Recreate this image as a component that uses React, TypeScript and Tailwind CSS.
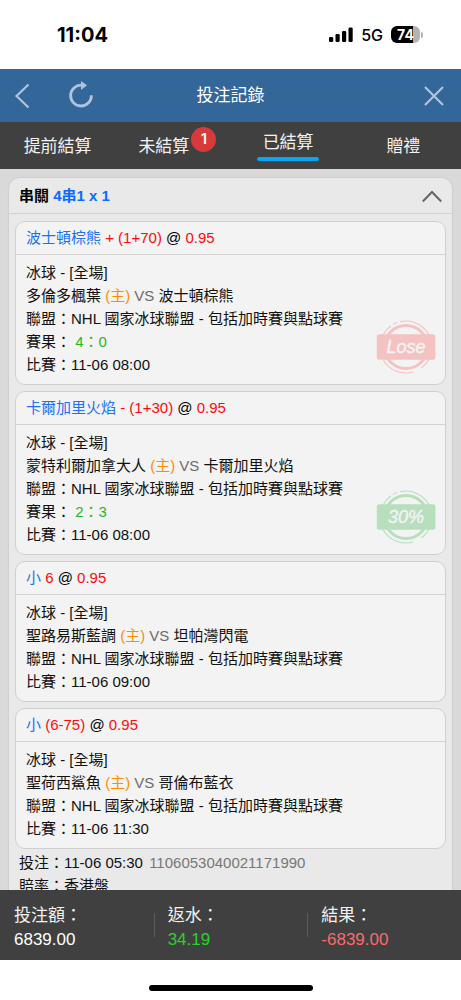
import { useState } from 'react';
import clsx from 'clsx';

type Bet = {
  pick: string;
  line: string;
  odds: string;
  home: string;
  away: string;
  result?: string;
  time: string;
  stamp?: 'lose' | 'partial';
};

const BETS: Bet[] = [
  { pick: '波士頓棕熊', line: '+ (1+70)', odds: '0.95', home: '多倫多楓葉', away: '波士頓棕熊', result: '4：0', time: '11-06 08:00', stamp: 'lose' },
  { pick: '卡爾加里火焰', line: '- (1+30)', odds: '0.95', home: '蒙特利爾加拿大人', away: '卡爾加里火焰', result: '2：3', time: '11-06 08:00', stamp: 'partial' },
  { pick: '小', line: '6', odds: '0.95', home: '聖路易斯藍調', away: '坦帕灣閃電', time: '11-06 09:00' },
  { pick: '小', line: '(6-75)', odds: '0.95', home: '聖荷西鯊魚', away: '哥倫布藍衣', time: '11-06 11:30' },
];

const TABS = [
  { id: 'early', label: '提前結算' },
  { id: 'open', label: '未結算', count: 1 },
  { id: 'settled', label: '已結算' },
  { id: 'gift', label: '贈禮' },
];

const TOTALS = [
  { label: '投注額：', value: '6839.00', color: 'text-white' },
  { label: '返水：', value: '34.19', color: 'text-[#2bd12b]' },
  { label: '結果：', value: '-6839.00', color: 'text-[#fa6b6b]' },
];

function StatusBar() {
  return (
    <div className="flex h-[69px] shrink-0 items-center justify-between bg-white pr-[38px] pl-[57px] font-['Inter',sans-serif] text-black">
      <span className="text-xl font-bold">11:04</span>
      <div className="flex items-center gap-2">
        <svg width="24" height="15" viewBox="0 0 24 15" fill="currentColor" aria-hidden="true">
          <rect x="0" y="10" width="4.2" height="5" rx="1.2" />
          <rect x="6.5" y="7" width="4.2" height="8" rx="1.2" />
          <rect x="13" y="4" width="4.2" height="11" rx="1.2" />
          <rect x="19.5" y="0.5" width="4.2" height="14.5" rx="1.2" />
        </svg>
        <span className="text-base font-medium">5G</span>
        <div className="flex items-center gap-px">
          <div className="flex h-[17px] w-[29px] items-center justify-center rounded-md bg-linear-to-r from-black from-75% to-[#b3b3b3] to-75% text-sm font-bold text-white">
            74
          </div>
          <div className="h-1.5 w-0.5 rounded-r-full bg-[#b3b3b3]" />
        </div>
      </div>
    </div>
  );
}

function Header() {
  return (
    <header className="flex h-[53px] shrink-0 items-center justify-between bg-[#336699] px-3 text-[#b0c4de]">
      <div className="flex flex-1 items-center gap-8">
        <button type="button" aria-label="返回" className="pl-0.5">
          <svg width="20" height="28" viewBox="0 0 20 28" fill="none" stroke="currentColor" strokeWidth="2.2">
            <path d="M14.5 2.5 L2.5 14 L14.5 25.5" />
          </svg>
        </button>
        <button type="button" aria-label="重新整理">
          <svg width="30" height="30" viewBox="0 0 30 30">
            <path d="M25.4 14.2 A10.4 10.4 0 1 1 15.6 4.2" fill="none" stroke="currentColor" strokeWidth="2.8" />
            <path d="M15 0 L21 4.2 L15 9 Z" fill="currentColor" />
          </svg>
        </button>
      </div>
      <h1 className="text-[17px] text-white">投注記錄</h1>
      <div className="flex flex-1 justify-end">
        <button type="button" aria-label="關閉" className="pr-1">
          <svg width="22" height="22" viewBox="0 0 22 22" fill="none" stroke="currentColor" strokeWidth="2.2">
            <path d="M2 2 L20 20 M20 2 L2 20" />
          </svg>
        </button>
      </div>
    </header>
  );
}

function Stamp({ kind }: { kind: 'lose' | 'partial' }) {
  return (
    <svg
      className={clsx('absolute right-[9px] bottom-[9px]', kind === 'lose' ? 'text-[#f5c2c2]' : 'text-[#b7dfbd]')}
      width="60"
      height="56"
      viewBox="0 0 60 56"
    >
      <g fill="none" stroke="currentColor">
        <circle cx="30" cy="28" r="21.5" strokeWidth="3" />
        <path strokeWidth="1.1" d="M17 5.5 A26 26 0 0 1 21 3.6 M24 2.7 A26 26 0 0 1 53 16 M7 16 A26 26 0 0 1 15 6.8 M54 38 A26 26 0 0 1 45.5 48.8 M7 40.5 A26 26 0 0 0 37 53" />
      </g>
      <rect x="0.8" y="15.3" width="58.6" height="25.4" rx="2.5" fill="currentColor" />
      <text
        x="30"
        y="34"
        textAnchor="middle"
        stroke="#f3f3f3"
        strokeWidth="0.4"
        className="fill-[#f3f3f3] font-['Liberation_Sans',sans-serif] text-lg italic"
      >
        {kind === 'lose' ? 'Lose' : '30%'}
      </text>
    </svg>
  );
}

function BetCard({ bet }: { bet: Bet }) {
  return (
    <li className="relative rounded-[10px] border border-[#cfcfcf] bg-[#f3f3f3]">
      <h3 className="border-b border-[#d3d3d3] px-2.5 leading-8">
        <span className="text-[#1a73f0]">{bet.pick}</span> <span className="text-[#ff0a0a]">{bet.line}</span>{' '}
        <span className="text-black">@</span> <span className="text-[#ff0a0a]">{bet.odds}</span>
      </h3>
      <div className="px-2.5 pt-1.5 pb-2 leading-[23px]">
        <p>冰球 - [全場]</p>
        <p>
          {bet.home} <span className="text-[#ff8c00]">(主)</span> <span className="text-[#6b6b6b]">VS</span> {bet.away}
        </p>
        <p>聯盟：NHL 國家冰球聯盟 - 包括加時賽與點球賽</p>
        {bet.result && (
          <p>
            賽果： <span className="text-[#1fb91f]">{bet.result}</span>
          </p>
        )}
        <p>比賽：{bet.time}</p>
      </div>
      {bet.stamp && <Stamp kind={bet.stamp} />}
    </li>
  );
}

export default function App() {
  const [tab, setTab] = useState('settled');
  const [open, setOpen] = useState(true);

  return (
    <div
      lang="zh-TW"
      className="flex h-screen flex-col bg-white font-['Liberation_Sans','Noto_Sans_CJK_TC',sans-serif] text-[15px] text-[#111]"
    >
      <StatusBar />
      <Header />

      <nav className="grid h-[47px] shrink-0 grid-cols-4 bg-[#404040] text-[17px] text-[#f2f2f2]">
        {TABS.map((t) => (
          <button
            key={t.id}
            type="button"
            onClick={() => setTab(t.id)}
            className={clsx('flex flex-col items-center justify-center', t.count && 'pr-[18px]', tab !== t.id && 'pt-0.5')}
          >
            <span className="relative leading-6">
              {t.label}
              {t.count && (
                <span className="absolute -top-2 left-full ml-0.5 flex size-[25px] items-center justify-center rounded-full bg-[#d63a3a] font-['Inter',sans-serif] text-sm font-semibold text-white">
                  {t.count}
                </span>
              )}
            </span>
            {tab === t.id && <span className="mt-0.5 h-1 w-[62px] rounded-full bg-[#03a9f4]" />}
          </button>
        ))}
      </nav>

      <main className="min-h-0 flex-1 overflow-y-auto bg-[#d9d9d9] px-[9px] pt-[9px] [scrollbar-width:none]">
        <section className="rounded-[10px] bg-[#e9e9e9] shadow-[0_0_2px_rgba(0,0,0,0.15)]">
          <button
            type="button"
            aria-expanded={open}
            onClick={() => setOpen(!open)}
            className="flex h-9 w-full items-center justify-between border-b border-[#d3d3d3] px-2.5 pt-0.5 font-bold text-black"
          >
            <span>
              串關 <span className="text-[#0a6cff]">4串1 x 1</span>
            </span>
            <svg
              className={clsx(!open && 'rotate-180')}
              width="20"
              height="14"
              viewBox="0 0 20 14"
              fill="none"
              stroke="#666"
              strokeWidth="2"
            >
              <path d="M0.8 11.5 L10 2 L19.2 11.5" />
            </svg>
          </button>
          {open && (
            <ul className="flex flex-col gap-1.5 px-1.5 pt-[7px]">
              {BETS.map((bet) => (
                <BetCard key={bet.home} bet={bet} />
              ))}
            </ul>
          )}
          <div className="px-2.5 pt-0.5 pb-3 leading-[23px]">
            <p>
              投注：11-06 05:30 <span className="ml-0.5 text-[#777]">1106053040021171990</span>
            </p>
            <p>賠率：香港盤</p>
          </div>
        </section>
      </main>

      <footer className="grid h-[70px] shrink-0 grid-cols-3 items-center bg-[#404040]">
        {TOTALS.map((item, i) => (
          <div key={item.label} className="flex items-center">
            <span className={clsx('h-6 w-px', i > 0 && 'bg-[#5c5c5c]')} />
            <div className="pt-1.5 pl-[13px] text-[17px] leading-6">
              <p className="text-[#f2f2f2]">{item.label}</p>
              <p className={item.color}>{item.value}</p>
            </div>
          </div>
        ))}
      </footer>

      <div className="flex h-10 shrink-0 items-end justify-center bg-white pb-[9px]">
        <span className="h-1.5 w-[164px] rounded-full bg-black" />
      </div>
    </div>
  );
}
